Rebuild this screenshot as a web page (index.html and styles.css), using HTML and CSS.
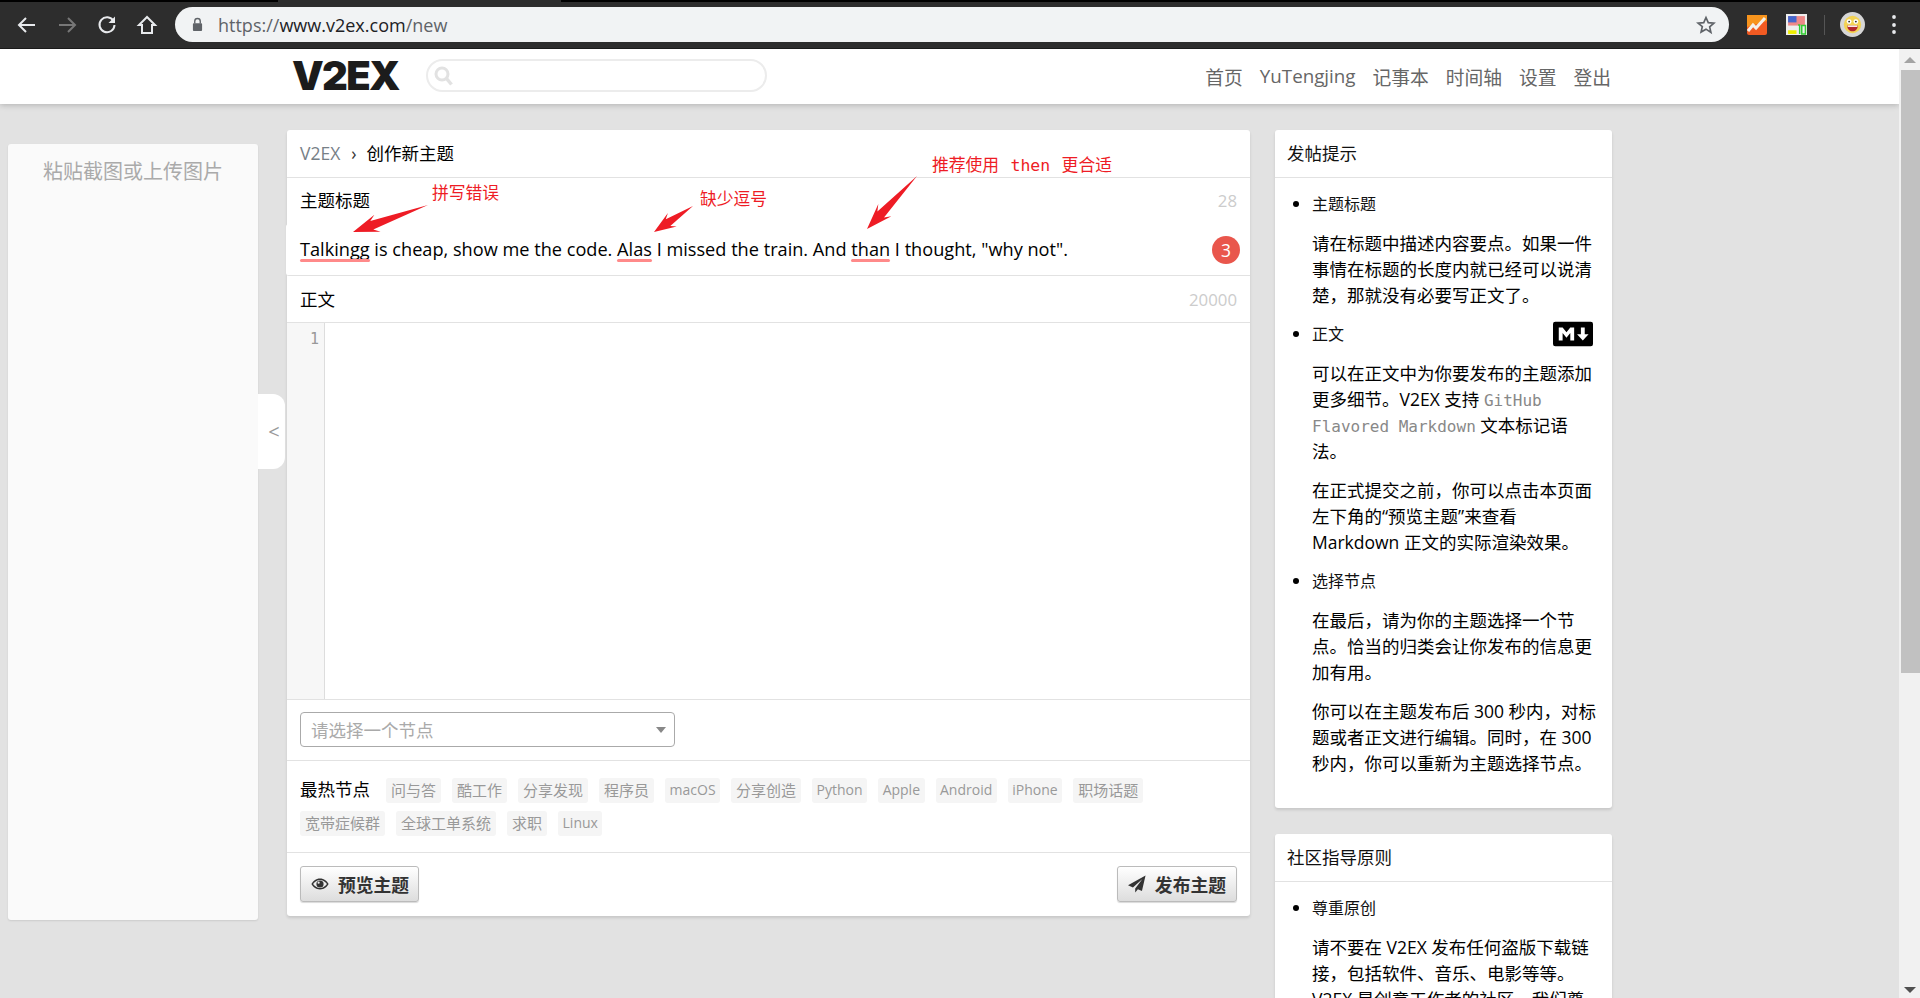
FILE: index.html
```html
<!DOCTYPE html>
<html lang="zh-CN">
<head>
<meta charset="utf-8">
<title>V2EX › 创作新主题</title>
<link rel="stylesheet" href="styles.css">
</head>
<body>
<div class="toolbar">
  <span class="tabedge"></span>
  <svg class="tbicon" viewBox="0 0 24 24"><path d="M20 12H5M11 5l-7 7 7 7" fill="none" stroke="#e8eaed" stroke-width="2"/></svg>
  <svg class="tbicon" viewBox="0 0 24 24"><path d="M4 12h15M13 5l7 7-7 7" fill="none" stroke="#777" stroke-width="2"/></svg>
  <svg class="tbicon" viewBox="0 0 24 24"><path d="M18.5 8A7.5 7.5 0 1 0 19.5 12" fill="none" stroke="#e8eaed" stroke-width="2"/><path d="M20 3.5v6.5h-6.500z" fill="#e8eaed"/></svg>
  <svg class="tbicon" viewBox="0 0 24 24"><path d="M12 4L4 12h3v8h10v-8h3z" fill="none" stroke="#e8eaed" stroke-width="2"/></svg>
  <div class="omnibox">
    <svg class="lock" viewBox="0 0 12 16"><path d="M3 7V4.500a3 3 0 0 1 6 0V7" fill="none" stroke="#5f6368" stroke-width="1.500"/><rect x="1" y="6.500" width="10" height="8.500" rx="1" fill="#5f6368"/></svg>
    <span class="url"><span class="urlmute">https://</span>www.v2ex.com<span class="urlmute">/new</span></span>
    <svg class="star" viewBox="0 0 24 24"><path d="M12 3l2.700 6.200 6.800.6-5.100 4.500 1.500 6.700L12 17l-5.900 3.500 1.500-6.700L2.500 9.800l6.800-.6z" fill="none" stroke="#5f6368" stroke-width="2"/></svg>
  </div>
  <div class="exts">
    <svg class="ext" viewBox="0 0 20 20"><rect width="20" height="20" rx="2" fill="#f15a22"/><path d="M0 0h20v6L0 12z" fill="#f7941d"/><path d="M1 16l5-6 3 3 9-10" fill="none" stroke="#f4f0ea" stroke-width="3"/></svg>
    <svg class="ext ext2" viewBox="0 0 20 20"><rect width="20" height="20" fill="#eee"/><rect x="2" y="2" width="16" height="9" fill="#e88"/><rect x="2" y="2" width="8" height="6" fill="#46c"/><rect x="2" y="15.500" width="8" height="3.500" fill="#ee0"/><path d="M11.500 10.500h1.500V19M15 11h3.500v8H15z" fill="none" stroke="#3c3" stroke-width="1.400"/></svg>
    <span class="extdiv"></span>
    <svg class="avatar" viewBox="0 0 26 26"><circle cx="13" cy="13" r="13" fill="#d6d6d6"/><circle cx="13" cy="13" r="9" fill="#f3d354"/><circle cx="9.500" cy="10" r="2.500" fill="#fff"/><circle cx="16.500" cy="10" r="2.500" fill="#fff"/><circle cx="9.500" cy="10" r="1" fill="#333"/><circle cx="16.500" cy="10" r="1" fill="#333"/><path d="M7.500 14h11c0 4-2.500 6-5.500 6s-5.500-2-5.500-6z" fill="#b3262e"/><rect x="8" y="14" width="10" height="1.500" fill="#fff"/></svg>
    <svg class="dots" viewBox="0 0 6 22"><circle cx="3" cy="3" r="1.900" fill="#e8eaed"/><circle cx="3" cy="11" r="1.900" fill="#e8eaed"/><circle cx="3" cy="18" r="1.900" fill="#e8eaed"/></svg>
  </div>
</div>

<div class="viewport">
  <div class="page">
    <header class="topbar">
      <a class="logo">V2EX</a>
      <div class="search">
        <svg class="searchicon" viewBox="0 0 20 20"><circle cx="8" cy="8" r="6" fill="none" stroke="#e2e2e2" stroke-width="3"/><path d="M12.500 12.500l5 6" stroke="#e2e2e2" stroke-width="3.500"/></svg>
      </div>
      <nav class="nav">
        <a>首页</a><a>YuTengjing</a><a>记事本</a><a>时间轴</a><a>设置</a><a>登出</a>
      </nav>
    </header>

    <div class="columns">
      <aside class="uploader">粘贴截图或上传图片</aside>
      <div class="collapse">&lt;</div>

      <main class="card">
        <div class="row crumbs"><a class="crumbroot">V2EX</a><span class="crumbsep">›</span><span>创作新主题</span></div>
        <div class="row labelrow"><span>主题标题</span><span class="count">28</span></div>
        <div class="row titlerow">
          <span class="titletext"><span class="flag">Talkingg</span> is cheap, show me the code. <span class="flag">Alas</span> I missed the train. And <span class="flag">than</span> I thought, "why not".</span>
          <span class="badge">3</span>
        </div>
        <div class="row bodylabel"><span>正文</span><span class="count">20000</span></div>
        <div class="editor"><div class="gutter">1</div><div class="code"></div></div>
        <div class="row selectrow">
          <div class="select"><span>请选择一个节点</span><span class="caret"></span></div>
        </div>
        <div class="row hot">
          <div class="tags">
            <span class="hotlabel">最热节点</span>
            <a class="tag">问与答</a><a class="tag">酷工作</a><a class="tag">分享发现</a><a class="tag">程序员</a><a class="tag tag-en">macOS</a><a class="tag">分享创造</a><a class="tag tag-en">Python</a><a class="tag tag-en">Apple</a><a class="tag tag-en">Android</a><a class="tag tag-en">iPhone</a><a class="tag">职场话题</a><a class="tag">宽带症候群</a><a class="tag">全球工单系统</a><a class="tag">求职</a><a class="tag tag-en">Linux</a>
          </div>
        </div>
        <div class="row actions">
          <button class="btn btn-preview"><svg class="btnicon" viewBox="0 0 20 14"><path d="M10 1C5.500 1 2 4 .5 7 2 10 5.500 13 10 13s8-3 9.500-6C18 4 14.500 1 10 1z" fill="#333"/><path d="M10 2.500C6.800 2.500 4 4.500 2.300 7 4 9.500 6.800 11.500 10 11.500s6-2 7.700-4.500C16 4.500 13.200 2.500 10 2.500z" fill="#eee"/><circle cx="10" cy="7" r="4" fill="#333"/><circle cx="8.500" cy="5.500" r="1.200" fill="#eee"/></svg>预览主题</button>
          <button class="btn btn-publish"><svg class="btnicon" viewBox="0 0 20 20"><path d="M19.500 .5L0 11.500l5.500 2.300L16 4.500 8 15v4.500l3-3.700 4.500 2z" fill="#333"/></svg>发布主题</button>
        </div>

        <div class="notes">
          <span class="note note1">拼写错误</span>
          <span class="note note2">缺少逗号</span>
          <span class="note note3">推荐使用 <code class="notecode">then</code> 更合适</span>
          <svg class="arrows" viewBox="287 130 963 130">
            <polygon points="428,205 373.300,229.400 380.600,231.700 353,232 374.400,214.700 370.300,221"/>
            <polygon points="693,206 670.300,225.900 676.700,226.400 654,232 667.900,213.100 665.800,219.300"/>
            <polygon points="917,176 884,217.600 891.400,216.300 867,229 878.300,203.900 877.400,211.400"/>
          </svg>
        </div>
      </main>

      <div class="sidebar">
        <section class="box">
          <h2 class="boxhead">发帖提示</h2>
          <ul class="tips">
            <li>
              <div class="tiptitle">主题标题</div>
              <p>请在标题中描述内容要点。如果一件<br>事情在标题的长度内就已经可以说清<br>楚，那就没有必要写正文了。</p>
            </li>
            <li>
              <div class="tiptitle tiptitle-md">正文
                <svg class="mdmark" viewBox="0 0 208 128"><rect width="208" height="128" rx="12" fill="#000"/><path d="M30 98V30h20l20 25 20-25h20v68H90V59L70 84 50 59v39zm125 0l-30-33h20V30h20v35h20z" fill="#fff"/></svg>
              </div>
              <p>可以在正文中为你要发布的主题添加<br>更多细节。V2EX 支持 <code>GitHub</code><br><code>Flavored Markdown</code> 文本标记语<br>法。</p>
              <p>在正式提交之前，你可以点击本页面<br>左下角的“预览主题”来查看<br>Markdown 正文的实际渲染效果。</p>
            </li>
            <li>
              <div class="tiptitle">选择节点</div>
              <p>在最后，请为你的主题选择一个节<br>点。恰当的归类会让你发布的信息更<br>加有用。</p>
              <p>你可以在主题发布后 300 秒内，对标<br>题或者正文进行编辑。同时，在 300<br>秒内，你可以重新为主题选择节点。</p>
            </li>
          </ul>
        </section>
        <section class="box">
          <h2 class="boxhead">社区指导原则</h2>
          <ul class="tips">
            <li>
              <div class="tiptitle">尊重原创</div>
              <p>请不要在 V2EX 发布任何盗版下载链<br>接，包括软件、音乐、电影等等。<br>V2EX 是创意工作者的社区，我们尊<br>重原创。</p>
            </li>
          </ul>
        </section>
      </div>
    </div>
  </div>

  <div class="scrollbar">
    <span class="sb-up"></span>
    <span class="sb-thumb"></span>
    <span class="sb-down"></span>
  </div>
</div>
</body>
</html>
```
FILE: styles.css
```css
* { box-sizing: border-box; }
html, body { margin: 0; height: 998px; overflow: hidden; }
body {
  font-family: "Open Sans", "Noto Sans CJK SC", sans-serif;
  font-size: 17.5px;
  color: #000;
  background: #e2e2e2;
}
a { color: inherit; text-decoration: none; }

/* browser chrome */
.toolbar {
  position: relative;
  height: 49px;
  background: #2d2d2d;
  border-top: 2px solid #000;
  border-bottom: 1px solid #1a1a1a;
  display: flex;
  align-items: center;
  padding: 0 0 1px 15px;
  gap: 16px;
}
.tabedge {
  position: absolute;
  left: 278px;
  top: -2px;
  width: 283px;
  height: 2px;
  background: #2d2d2d;
}
.tbicon { width: 24px; height: 24px; flex: none; }
.omnibox {
  width: 1554px;
  height: 35px;
  margin-left: 0;
  background: #f1f3f4;
  border-radius: 18px;
  display: flex;
  align-items: center;
  padding: 0 13px 0 17px;
}
.lock { width: 11px; height: 15px; flex: none; }
.url {
  margin-left: 15px;
  font-size: 18px;
  color: #202124;
  flex: 1;
}
.urlmute { color: #5f6368; }
.star { width: 20px; height: 20px; flex: none; }
.exts { display: flex; align-items: center; flex: none; margin-left: 2px; }
.ext { width: 20px; height: 20px; flex: none; }
.ext2 { width: 21px; height: 21px; margin-left: 19px; }
.extdiv { width: 1px; height: 20px; background: #555; margin-left: 17px; }
.avatar { width: 25px; height: 25px; margin-left: 15px; }
.dots { width: 6px; height: 22px; margin-left: 26px; }

/* page */
.viewport { display: flex; height: 949px; }
.page { width: 1899px; flex: none; overflow: hidden; }
.scrollbar {
  width: 21px;
  flex: none;
  background: #f1f1f1;
  display: flex;
  flex-direction: column;
  align-items: flex-end;
  position: relative;
}
.sb-up, .sb-down {
  width: 0;
  height: 0;
  border-left: 6px solid transparent;
  border-right: 6px solid transparent;
  position: absolute;
  left: 5px;
}
.sb-up { top: 8px; border-bottom: 6px solid #a3a3a3; }
.sb-down { bottom: 5px; border-top: 6px solid #505050; }
.sb-thumb {
  width: 19px;
  height: 603px;
  margin-top: 21px;
  background: #c1c1c1;
}

.topbar {
  height: 55px;
  background: #fff;
  box-shadow: 0 1px 6px rgba(0,0,0,.22);
  display: flex;
  align-items: center;
  padding: 0 0 2px 292px;
  position: relative;
}
.logo {
  font-family: "Inter", "Liberation Sans", sans-serif;
  font-weight: 900;
  font-size: 40px;
  letter-spacing: -1.700px;
  color: #1c1c1c;
  line-height: 1;
  width: 134px;
  flex: none;
}
.search {
  width: 341px;
  height: 33px;
  border: 2px solid #ececec;
  border-radius: 17px;
  display: flex;
  align-items: center;
  padding-left: 6px;
  flex: none;
}
.searchicon { width: 20px; height: 20px; }
.nav {
  display: flex;
  gap: 17px;
  font-size: 18.750px;
  color: #666;
  margin-left: auto;
  margin-right: 288px;
  position: relative;
  top: 1px;
}

.columns { display: flex; align-items: flex-start; padding: 26px 0 0 8px; }
.uploader {
  width: 250px;
  height: 776px;
  margin-top: 14px;
  background: #fafafa;
  border-radius: 3px;
  box-shadow: 0 1px 2px rgba(0,0,0,.1);
  color: #aaa;
  font-size: 20px;
  text-align: center;
  padding-top: 12px;
  flex: none;
}
.collapse {
  width: 27px;
  height: 75px;
  margin-top: 264px;
  background: #fff;
  border-radius: 0 12px 12px 0;
  color: #999;
  font-size: 20px;
  display: flex;
  align-items: center;
  justify-content: center;
  padding-left: 5px;
  flex: none;
}
.card {
  width: 963px;
  height: 786px;
  margin-left: 2px;
  background: #fff;
  border-radius: 3px;
  box-shadow: 0 2px 3px rgba(0,0,0,.12);
  position: relative;
  flex: none;
}
.row {
  display: flex;
  align-items: center;
  justify-content: space-between;
  padding: 0 13px 0 13px;
  border-bottom: 1px solid #e2e2e2;
}
.crumbs { height: 48px; justify-content: flex-start; padding-bottom: 2px; }
.crumbroot { color: #778087; }
.crumbsep { margin: 0 10px 0 11px; color: #333; }
.labelrow { height: 46px; align-items: flex-start; padding-top: 9px; border-bottom: 0; }
.count { color: #ccc; font-size: 16.800px; margin-top: 2px; }
.titlerow {
  height: 52px;
  margin-left: -1px;
  padding-left: 14px;
  padding-right: 10px;
  border-radius: 3px 0 0 3px;
  background: #fff;
}
.titletext { font-size: 18.170px; position: relative; top: -1px; }
.flag { position: relative; }
.flag::after {
  content: "";
  position: absolute;
  left: 0;
  right: 0;
  bottom: -1px;
  height: 3px;
  border-radius: 2px;
  background: #ff8a8a;
}
.badge {
  width: 28px;
  height: 28px;
  border-radius: 50%;
  background: #e9564c;
  color: #fff;
  display: flex;
  align-items: center;
  justify-content: center;
  font-size: 17.500px;
}
.bodylabel { height: 47px; padding-bottom: 2px; }
.editor { display: flex; height: 377px; border-bottom: 1px solid #e2e2e2; }
.gutter {
  width: 38px;
  flex: none;
  background: #f7f7f7;
  border-right: 1px solid #ddd;
  color: #999;
  font-family: "DejaVu Sans Mono", monospace;
  font-size: 15px;
  text-align: right;
  padding: 7px 5px 0 0;
}
.code { flex: 1; }
.selectrow { height: 61px; padding-bottom: 1px; }
.select {
  width: 375px;
  height: 35px;
  border: 1px solid #aaa;
  border-radius: 4px;
  display: flex;
  align-items: center;
  justify-content: space-between;
  padding: 0 8px 0 10px;
  color: #aaa;
}
.caret {
  width: 0;
  height: 0;
  border-left: 5px solid transparent;
  border-right: 5px solid transparent;
  border-top: 6px solid #888;
}
.hot { height: 92px; align-items: flex-start; padding-top: 17px; }
.tags { display: flex; flex-wrap: wrap; gap: 8px 11px; align-items: flex-start; width: 880px; }
.hotlabel { width: 75px; height: 25px; line-height: 23px; }
.tag {
  height: 25px;
  line-height: 24px;
  padding: 0 5px;
  background: #f5f5f5;
  border-radius: 3px;
  color: #999;
  font-size: 15px;
}
.tag-en { font-size: 14px; padding: 0 4.500px; }
.actions { height: 63px; border-bottom: 0; padding-bottom: 1px; }
.btn {
  height: 36px;
  display: flex;
  align-items: center;
  padding: 0 10px;
  border: 1px solid #bbb;
  border-radius: 3px;
  background: linear-gradient(#fff, #ddd);
  box-shadow: 0 1px 1px rgba(0,0,0,.15);
  color: #333;
  font: 700 17.800px "Open Sans", "Noto Sans CJK SC", sans-serif;
}
.btn-preview { padding-right: 9px; }
.btnicon { flex: none; width: 18px; height: 18px; margin-right: 9px; }

.notes { position: absolute; inset: 0; pointer-events: none; }
.note { position: absolute; color: #ee1c25; font-size: 16.800px; line-height: 20px; white-space: nowrap; }
.note1 { left: 145px; top: 53px; }
.note2 { left: 413px; top: 59px; }
.note3 { left: 645px; top: 25px; }
.notecode { font-family: "DejaVu Sans Mono", monospace; font-size: 16.500px; margin: 0 7px; color: #ee1c25; }
.arrows { position: absolute; left: 0; top: 0; width: 963px; height: 130px; }
.arrows polygon { fill: #ee1c25; }

.sidebar {
  width: 337px;
  margin-left: 25px;
  flex: none;
  display: flex;
  flex-direction: column;
  gap: 26px;
}
.box { background: #fff; border-radius: 3px; box-shadow: 0 2px 3px rgba(0,0,0,.12); }
.boxhead {
  margin: 0;
  height: 48px;
  line-height: 46px;
  padding-left: 12px;
  border-bottom: 1px solid #e2e2e2;
  font-size: 17.500px;
  font-weight: 400;
  color: #111;
}
.tips { margin: 0; padding: 13px 0 32px 37px; list-style: none; }
.tips li { position: relative; margin-top: 13px; }
.tips li:first-child { margin-top: 0; }
.tips li::before {
  content: "";
  position: absolute;
  left: -19px;
  top: 10px;
  width: 6px;
  height: 6px;
  border-radius: 50%;
  background: #000;
}
.tips p { margin: 13px 0; line-height: 26px; width: 290px; white-space: nowrap; }
.tips p:last-child { margin-bottom: 0; }
.tiptitle { font-size: 16px; line-height: 26px; color: #111; position: relative; }
.mdmark { position: absolute; left: 241px; top: 0; width: 40px; height: 26px; }
code { font-family: "DejaVu Sans Mono", monospace; font-size: 16px; line-height: 1; color: #888; }
```
